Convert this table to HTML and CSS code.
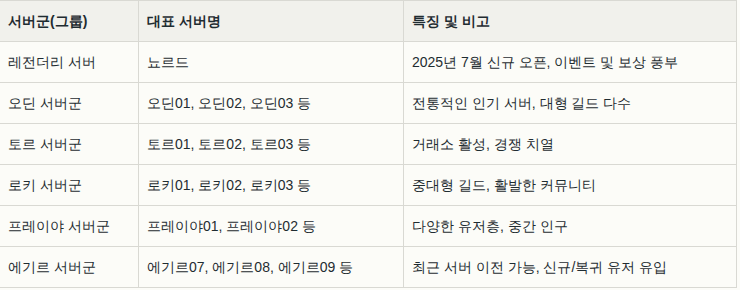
FILE: index.html
```html
<!DOCTYPE html>
<html lang="ko">
<head>
<meta charset="utf-8">
<link rel="stylesheet" href="styles.css">
</head>
<body>
<table class="servers">
  <colgroup>
    <col class="c1">
    <col class="c2">
    <col class="c3">
  </colgroup>
  <thead>
    <tr><th>서버군(그룹)</th><th>대표 서버명</th><th>특징 및 비고</th></tr>
  </thead>
  <tbody>
    <tr><td>레전더리 서버</td><td>뇨르드</td><td>2025년 7월 신규 오픈, 이벤트 및 보상 풍부</td></tr>
    <tr><td>오딘 서버군</td><td>오딘01, 오딘02, 오딘03 등</td><td>전통적인 인기 서버, 대형 길드 다수</td></tr>
    <tr><td>토르 서버군</td><td>토르01, 토르02, 토르03 등</td><td>거래소 활성, 경쟁 치열</td></tr>
    <tr><td>로키 서버군</td><td>로키01, 로키02, 로키03 등</td><td>중대형 길드, 활발한 커뮤니티</td></tr>
    <tr><td>프레이야 서버군</td><td>프레이야01, 프레이야02 등</td><td>다양한 유저층, 중간 인구</td></tr>
    <tr><td>에기르 서버군</td><td>에기르07, 에기르08, 에기르09 등</td><td>최근 서버 이전 가능, 신규/복귀 유저 유입</td></tr>
  </tbody>
</table>
</body>
</html>
```
FILE: styles.css
```css
html, body {
  margin: 0;
  padding: 0;
  background: #fcfcf8;
}
body {
  font-family: "Liberation Sans", sans-serif;
  font-size: 14px;
  color: #1f2c31;
}
.servers {
  border-collapse: separate;
  border-spacing: 0;
  table-layout: fixed;
  width: 737px;
}
.c1 { width: 139px; }
.c2 { width: 265px; }
.c3 { width: 333px; }
.servers th,
.servers td {
  box-sizing: border-box;
  text-align: left;
  padding: 0 8px;
  height: 41px;
  line-height: 20px;
  border-right: 1px solid #d9d9d3;
  border-bottom: 1px solid #d9d9d3;
  white-space: nowrap;
  vertical-align: middle;
}
.servers th {
  height: 42px;
  border-top: 1px solid #d9d9d3;
  background: #f1f1ec;
  font-weight: bold;
}
.servers td {
  background: #fcfcf8;
}
```
